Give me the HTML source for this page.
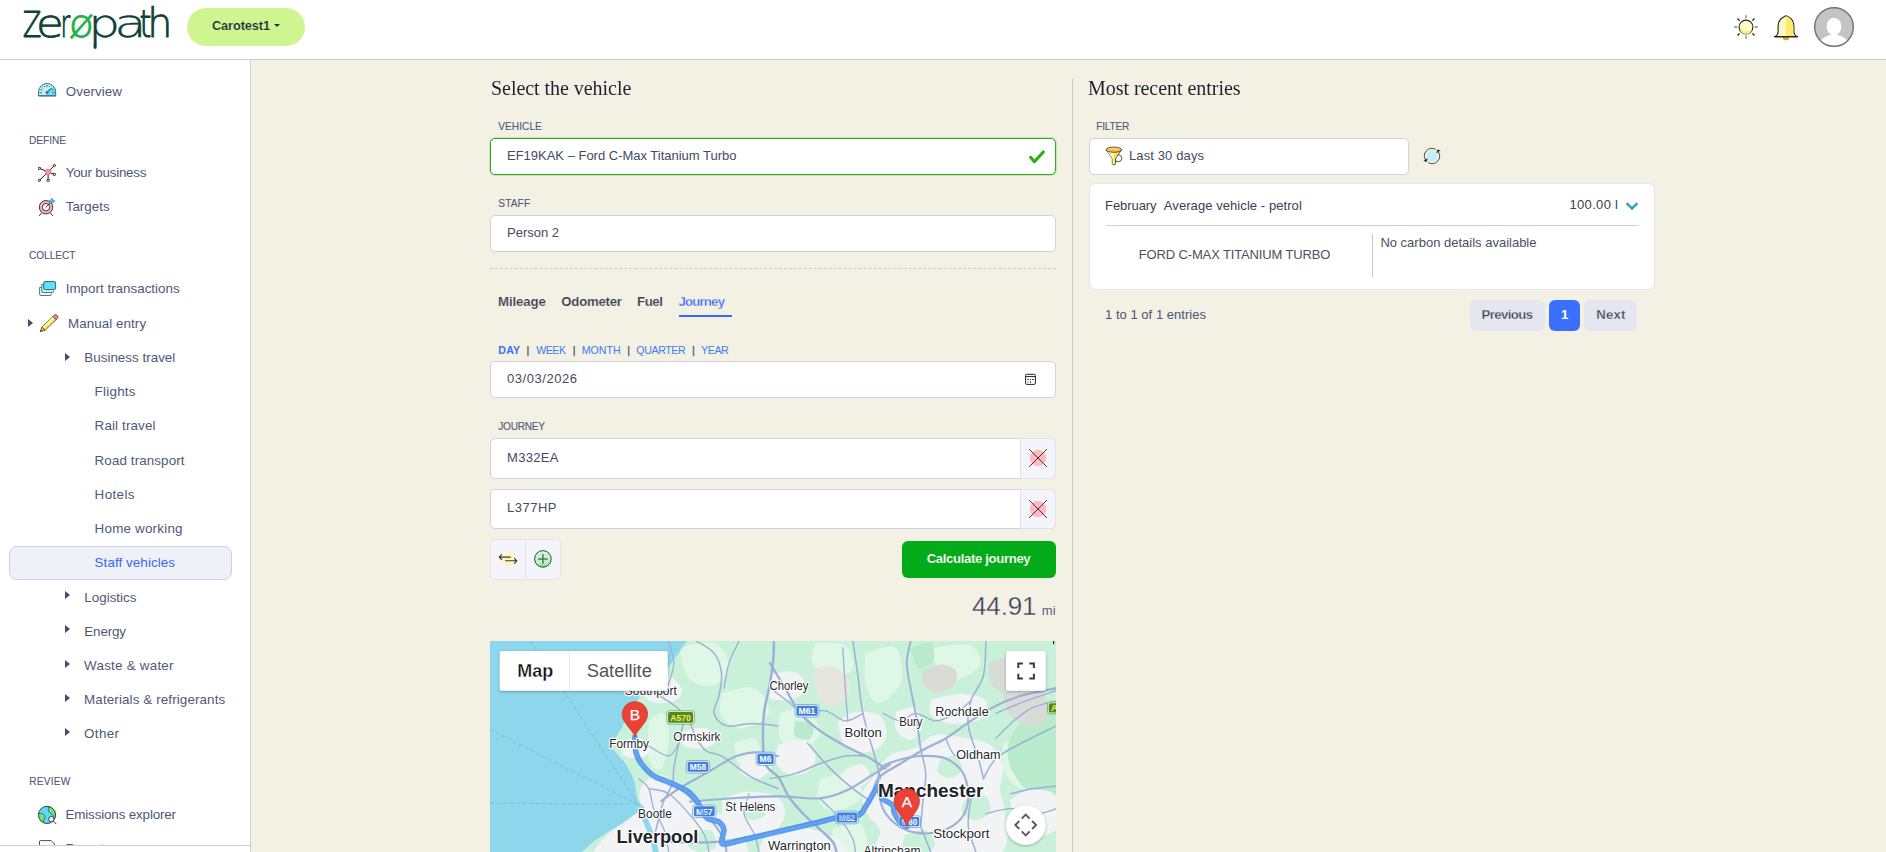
<!DOCTYPE html>
<html lang="en">
<head>
<meta charset="utf-8">
<title>Zeropath – Staff vehicles</title>
<style>
*{box-sizing:border-box;margin:0;padding:0}
html,body{width:1886px;height:852px;overflow:hidden;background:#f3f0e4;font-family:"Liberation Sans",sans-serif;color:#4a5473}
.abs{position:absolute}
#hdr{position:absolute;left:0;top:0;width:1886px;height:60px;background:#fff;border-bottom:1px solid #c9cfe2}
#side{position:absolute;left:0;top:60px;width:251px;height:792px;background:#fff;border-right:1px solid #c9cfe2}
#sidefoot{position:absolute;left:0;top:845px;width:251px;height:7px;background:#fff;border-right:1px solid #c9cfe2;border-top:1px solid #c9cfe2;z-index:5}
.t{position:absolute;white-space:nowrap;line-height:1;font-size:13px}
.box{position:absolute;background:#fff;border:1px solid #cdd3e3;border-radius:5px}
.car{position:absolute;width:0;height:0;border-left:5.4px solid #464e70;border-top:4px solid transparent;border-bottom:4px solid transparent}
svg{position:absolute;overflow:visible}
#pill{position:absolute;left:187px;top:8px;width:118px;height:38px;border-radius:19px;background:#cff590}
#sel{position:absolute;left:9px;top:546px;width:223px;height:34px;border:1px solid #cbd1e2;border-radius:8px;background:#eef1f8}
.addon{position:absolute;background:#f4f5fa;border:1px solid #dfe3ee}
.pg{position:absolute;top:300px;height:31px;border-radius:6px;background:#e4e7f0}
</style>
</head>
<body>
<div id="hdr"></div>
<div id="side"></div>
<div id="sidefoot"></div>

<!-- header -->
<svg id="logo" style="left:0;top:0" width="180" height="58" viewBox="0 0 180 58"><text y="37.4" font-family="'DejaVu Sans',sans-serif" font-weight="200" stroke-width="0.75" stroke-linejoin="round"><tspan x="22.77" font-size="35.4" textLength="18.65" lengthAdjust="spacingAndGlyphs" fill="#0e4037" stroke="#0e4037" stroke-width="1.0">Z</tspan><tspan x="36.08" font-size="39.2" textLength="27.82" lengthAdjust="spacingAndGlyphs" fill="#0e4037" stroke="#0e4037" stroke-width="0.75">e</tspan><tspan x="60.57" font-size="39.2" textLength="9.76" lengthAdjust="spacingAndGlyphs" fill="#0e4037" stroke="#0e4037" stroke-width="1.0">r</tspan><tspan x="68.65" font-size="38.2" textLength="25.28" lengthAdjust="spacingAndGlyphs" fill="#22b14c" stroke="#22b14c" stroke-width="0.85">ø</tspan><tspan x="88.22" font-size="39.2" textLength="31.88" lengthAdjust="spacingAndGlyphs" fill="#0e4037" stroke="#0e4037" stroke-width="0.45">p</tspan><tspan x="114.23" font-size="39.2" textLength="32.44" lengthAdjust="spacingAndGlyphs" fill="#0e4037" stroke="#0e4037" stroke-width="0.4">a</tspan><tspan x="139.47" font-size="36.8" textLength="11.96" lengthAdjust="spacingAndGlyphs" fill="#0e4037" stroke="#0e4037" stroke-width="1.0">t</tspan><tspan x="147.23" font-size="40.6" textLength="25.20" lengthAdjust="spacingAndGlyphs" fill="#0e4037" stroke="#0e4037" stroke-width="0.75">h</tspan></text><rect x="93.600" y="44" width="3" height="4.700" rx=".9" fill="#0e4037"/></svg>
<div id="pill"></div>
<div class="abs" style="left:273.7px;top:24px;width:0;height:0;border-top:3px solid #27303a;border-left:3px solid transparent;border-right:3px solid transparent"></div>
<!-- sun -->
<svg style="left:1733px;top:14px" width="26" height="26" viewBox="-13 -13 26 26">
<g stroke="#7d7d78" stroke-width="1.3" stroke-linecap="round"><path d="M0-11.3V-9.2M0 11.3V9.2M-11.3 0H-9.2M11.3 0H9.2M-8-8L-6.6-6.6M8 8L6.6 6.6M-8 8L-6.6 6.6M8-8L6.6-6.6"/></g>
<g stroke="#2b2b25" stroke-width="1.1" stroke-linecap="round"><path d="M-8-8L-6.9-6.9M8 8L6.9 6.9M-8 8L-6.9 6.9M8-8L6.9-6.9"/></g>
<circle r="6.9" fill="#fffbc8" stroke="#26261f" stroke-width="1.1"/>
<path d="M-6.2 2.2A6.4 6.4 0 0 0 6.2 2.2A12 12 0 0 1-6.2 2.2Z" fill="#fdf07a"/>
</svg>
<!-- bell -->
<svg style="left:1772px;top:13.600px" width="28" height="28" viewBox="0 0 28 28">
<path d="M11 23.600a3 2.300 0 0 0 6 0z" fill="#f5a623" stroke="#c47d12" stroke-width=".5"/>
<path d="M3 22.6c2.2-1 2.9-2.2 3.1-4.6V12C6.3 6.6 10 3.4 12.6 2.4c.8-.9 2-.9 2.8 0C18 3.4 21.700 6.600 21.900 12V18c.2 2.400.900 3.600 3.100 4.600z" fill="#fff9c4" stroke="#1e1e1e" stroke-width="1.1" stroke-linejoin="round"/>
<path d="M14 2.300C17.600 3.300 21.200 6.600 21.350 12V18c.15 2.200.650 3.300 2 4.050H14z" fill="#fdec6a"/>
<path d="M2.4 22.6H25.6" stroke="#1e1e1e" stroke-width="1.2" stroke-linecap="round"/>
</svg>
<!-- avatar -->
<svg style="left:1814px;top:7px" width="40" height="40" viewBox="0 0 40 40">
<defs><clipPath id="avc"><circle cx="20" cy="20" r="19"/></clipPath></defs>
<circle cx="20" cy="20" r="19.2" fill="#c4c4c4"/>
<g clip-path="url(#avc)" fill="#fff"><ellipse cx="20" cy="19.500" rx="7.400" ry="8.800"/><path d="M5 40c0-8 6-10.500 11.500-12h7c5.500 1.500 11.500 4 11.500 12z"/></g>
<circle cx="20" cy="20" r="19.300" fill="none" stroke="#75726c" stroke-width="1.400"/>
</svg>


<!-- sidebar -->
<div id="sel"></div>
<div class="car" style="left:27.5px;top:318.5px"></div>
<div class="car" style="left:64.7px;top:352.7px"></div>
<div class="car" style="left:64.7px;top:591.3px"></div>
<div class="car" style="left:64.7px;top:625.3px"></div>
<div class="car" style="left:64.7px;top:659.5px"></div>
<div class="car" style="left:64.7px;top:693.5px"></div>
<div class="car" style="left:64.7px;top:727.5px"></div>
<!-- overview gauge -->
<svg style="left:36px;top:80px" width="22" height="19" viewBox="36 80 22 19">
<defs><clipPath id="gcl"><path d="M38.500 96V92.100a8.600 8.600 0 0 1 17.200 0V96z"/></clipPath></defs>
<path d="M38.500 96V92.100a8.600 8.600 0 0 1 17.200 0V96z" fill="#bff1fb"/>
<path d="M44 96.500L56 84.500V96.500z" fill="#6fe0fa" clip-path="url(#gcl)"/>
<path d="M38.500 96V92.100a8.600 8.600 0 0 1 17.200 0V96z" fill="none" stroke="#2c5a6b" stroke-width=".9" stroke-linejoin="round"/>
<path d="M38.400 95.600H55.800" stroke="#2f8199" stroke-width="1.1"/>
<g stroke="#356f80" stroke-width="1.1"><path d="M39.600 92.700H42M52.200 92.700H54.600M47 85V87M40.600 89.400L42 90.400M53.400 89.400L52.100 90.300"/></g>
<g fill="#2b5866"><circle cx="44.500" cy="86.500" r=".6"/><circle cx="49.500" cy="86.500" r=".6"/><circle cx="42.500" cy="88" r=".5"/></g>
<path d="M47.100 92.300L51.500 88.100" stroke="#2b6a80" stroke-width="1.2" stroke-linecap="round"/>
<circle cx="47" cy="92.500" r="1.250" fill="#d63a3a" stroke="#2b6a80" stroke-width=".5"/>
</svg>
<!-- your business -->
<svg style="left:36px;top:162px" width="22" height="22" viewBox="36 162 22 22">
<g stroke="#1d1d1d" stroke-width="1" stroke-linecap="round"><path d="M48 172L54.400 165.500M48 172L39.400 180.400M48 172L39.800 168.400M48 172L54.200 174.400M48.100 172V180"/></g>
<circle cx="48" cy="171.900" r="3" fill="#fb8b9c" stroke="#e06a7d" stroke-width=".4"/>
<g fill="#f6e24a" stroke="#1d1d1d" stroke-width=".9"><circle cx="54.400" cy="165.500" r="1.100"/><circle cx="39.400" cy="180.400" r="1.100"/><rect x="38.500" y="167.300" width="2.100" height="2.100" stroke-width=".6"/><rect x="53.400" y="173.500" width="2.100" height="2.100" stroke-width=".6"/><rect x="47.100" y="179.300" width="2.100" height="2.100" stroke-width=".6"/></g>
</svg>
<!-- targets -->
<svg style="left:36px;top:196px" width="22" height="22" viewBox="36 196 22 22">
<path d="M39.400 215.600L41.500 213.100M52.600 215.600L50.400 213.100" stroke="#1d1d1d" stroke-width=".9" stroke-linecap="round"/>
<circle cx="46" cy="207.200" r="6.700" fill="#f98b9b" stroke="#1d1d1d" stroke-width=".8"/>
<circle cx="46" cy="207.200" r="5.200" fill="none" stroke="#fdc3cb" stroke-width="1.200"/>
<circle cx="46" cy="207.200" r="3.700" fill="#fff" stroke="#1d1d1d" stroke-width=".8"/>
<path d="M46 207.200L51 202.300" stroke="#1d1d1d" stroke-width=".9" stroke-linecap="round"/>
<path d="M50.200 203.200L50 200.300L52.300 198L52.800 200.300L55.100 200.800L52.900 203.100z" fill="#4cc3e6" stroke="#1e7fa0" stroke-width=".5" stroke-linejoin="round"/>
</svg>
<!-- import transactions -->
<svg style="left:36px;top:278px" width="22" height="20" viewBox="36 278 22 20">
<path d="M41.700 287.500H39.600V294.300a1.200 1.200 0 0 0 1.200 1.200H50.200a1.200 1.200 0 0 0 1.200-1.200V293.500" fill="#e3fafe" stroke="#2a5565" stroke-width=".8"/>
<path d="M43.800 284.500H41.800V291.300a1.200 1.200 0 0 0 1.200 1.200H52.400a1.200 1.200 0 0 0 1.200-1.200V290.500" fill="#c8f5fd" stroke="#2a5565" stroke-width=".8"/>
<rect x="43.700" y="281.600" width="11.900" height="8" rx="1.400" fill="#62e0fb" stroke="#2a5565" stroke-width=".9"/>
</svg>
<!-- manual entry pencil -->
<svg style="left:37px;top:312px" width="24" height="22" viewBox="37 312 24 22">
<g transform="translate(40.200 331.700) rotate(-43.500)">
<path d="M0 0L4.600-2.250V2.250z" fill="#f5b042" stroke="#3a3322" stroke-width=".7" stroke-linejoin="round"/>
<path d="M0 0L1.700-.8V.8z" fill="#3a3322"/>
<rect x="4.600" y="-2.250" width="15.200" height="4.500" fill="#f9e860" stroke="#3a3322" stroke-width=".7"/>
<rect x="4.900" y="-1.900" width="14.800" height="1.700" fill="#fdf6a8"/>
<path d="M19.800-2.250h2a1.600 2.250 0 0 1 0 4.500H19.800z" fill="#f7879c" stroke="#3a3322" stroke-width=".7"/>
</g>
</svg>
<!-- emissions explorer -->
<svg style="left:36px;top:804px" width="22" height="22" viewBox="36 804 22 22">
<defs><clipPath id="gl"><circle cx="47" cy="814.900" r="8.600"/></clipPath></defs>
<circle cx="47" cy="814.900" r="8.600" fill="#5fd8f7"/>
<g clip-path="url(#gl)" fill="#72e37c" stroke="#2b4a3a" stroke-width=".7" stroke-linejoin="round">
<path d="M37 813.600c2.500-.3 5.500-.1 6.800.8c1.300 1 1.600 2.600.9 3.900c-.8 1.400-1.300 2.800-1.500 5l-2 1.500l-5-4z"/>
<path d="M48 807.800c1.500-1.200 4-1.700 5.500-1l3.500 4.500v9l-2.500-1c-.6-2.800-1.500-4.600-3.300-5.600c-1.700-1-2.700-2-2.500-3.300c.1-1 .2-1.800-.7-2.600z"/>
</g>
<circle cx="47" cy="814.900" r="8.600" fill="none" stroke="#23352d" stroke-width=".9"/>
<path d="M53.300 821.100L55.900 823.700" stroke="#2b2b2b" stroke-width="1" stroke-linecap="round"/>
<circle cx="51.300" cy="819.100" r="2.700" fill="#eef0f0" stroke="#2b2b2b" stroke-width=".8"/>
</svg>
<!-- reports (clipped) -->
<svg style="left:38px;top:839px" width="20" height="10" viewBox="38 839 20 10">
<path d="M39.500 849V841.600a1 1 0 0 1 1-1H51.200L54.500 844V849" fill="#fff" stroke="#3a3a3a" stroke-width=".9"/>
</svg>


<!-- main column 1 -->
<div class="box" style="left:490px;top:138px;width:566px;height:37px;border:1px solid #36ab19;box-shadow:0 0 0 1px rgba(54,171,25,.22)"></div>
<div class="box" style="left:490px;top:215px;width:566px;height:37px"></div>
<div class="abs" style="left:490px;top:268px;width:566px;height:0;border-top:1px dashed #c6ccdd"></div>
<div class="abs" style="left:679px;top:314.5px;width:53px;height:2px;background:#3568f5"></div>
<div class="box" style="left:490px;top:361px;width:566px;height:37px"></div>
<div class="box" style="left:490px;top:438px;width:566px;height:41px"></div>
<div class="addon" style="left:1020px;top:438px;width:36px;height:41px;border-radius:0 5px 5px 0"></div>
<div class="box" style="left:490px;top:489px;width:566px;height:40px"></div>
<div class="addon" style="left:1020px;top:489px;width:36px;height:40px;border-radius:0 5px 5px 0"></div>
<div class="addon" style="left:490px;top:539px;width:36px;height:41px;border-radius:5px 0 0 5px"></div>
<div class="addon" style="left:525px;top:539px;width:36px;height:41px;border-radius:0 5px 5px 0"></div>
<div class="abs" style="left:902px;top:541px;width:154px;height:37px;border-radius:6px;background:#02ab17"></div>
<svg id="map" style="left:490px;top:641px" width="566" height="211" viewBox="490 641 566 211">
<defs><clipPath id="mclip"><rect x="490" y="641" width="566" height="211"/></clipPath><filter id="sh" x="-20%" y="-20%" width="140%" height="150%"><feDropShadow dx="0" dy="1" stdDeviation="1.500" flood-color="#000" flood-opacity=".3"/></filter></defs>
<g clip-path="url(#mclip)">
<rect x="490" y="641" width="566" height="211" fill="#c9f1da"/>
<path d="M678.8 648.0 C684.7 647.2 705.6 640.1 714.0 643.0 C722.3 646.0 729.0 658.5 729.0 665.6 C729.0 672.7 720.7 683.6 714.0 685.7 C707.3 687.8 694.7 684.4 688.9 678.2 C683.0 671.9 680.5 653.1 678.8 648.0" fill="#def7e7"/>
<path d="M721.5 693.2 C726.9 692.4 746.2 684.9 754.1 688.2 C762.1 691.6 771.3 706.6 769.2 713.3 C767.1 720.0 749.5 728.0 741.6 728.4 C733.6 728.8 724.8 721.7 721.5 715.8 C718.1 710.0 721.5 697.0 721.5 693.2" fill="#def7e7"/>
<path d="M648.7 720.9 C651.2 719.6 660.4 710.4 663.7 713.3 C667.1 716.2 669.2 729.2 668.8 738.4 C668.3 747.6 664.6 765.2 661.2 768.6 C657.9 771.9 650.8 766.5 648.7 758.5 C646.6 750.6 648.7 727.1 648.7 720.9" fill="#def7e7"/>
<path d="M734.0 743.4 C737.4 742.6 749.9 736.3 754.1 738.4 C758.3 740.5 761.7 751.8 759.2 756.0 C756.6 760.2 743.3 765.6 739.1 763.5 C734.9 761.4 734.9 746.8 734.0 743.4" fill="#def7e7"/>
<path d="M815.2 643.0 C820.2 643.4 839.0 641.3 845.3 645.5 C851.6 649.7 854.9 662.7 852.9 668.1 C850.8 673.6 839.5 679.0 832.8 678.2 C826.1 677.3 815.6 669.0 812.7 663.1 C809.8 657.2 814.8 646.4 815.2 643.0" fill="#def7e7"/>
<path d="M865.4 653.1 C870.4 652.2 889.7 643.0 895.5 648.0 C901.4 653.1 903.5 674.0 900.6 683.2 C897.6 692.4 883.8 703.3 878.0 703.3 C872.1 703.3 867.5 691.6 865.4 683.2 C863.3 674.8 865.4 658.1 865.4 653.1" fill="#def7e7"/>
<path d="M780.0 713.3 C784.2 712.5 798.5 705.0 805.1 708.3 C811.8 711.6 821.1 726.7 820.2 733.4 C819.4 740.1 806.8 747.6 800.1 748.5 C793.4 749.3 783.4 744.3 780.0 738.4 C776.7 732.6 780.0 717.5 780.0 713.3" fill="#def7e7"/>
<path d="M930.7 648.0 C937.4 647.6 962.9 642.2 970.9 645.5 C978.8 648.9 982.6 662.3 978.4 668.1 C974.2 674.0 953.7 684.0 945.7 680.7 C937.8 677.3 933.2 653.5 930.7 648.0" fill="#def7e7"/>
<path d="M1003.5 743.4 C1008.5 741.8 1024.8 733.0 1033.6 733.4 C1042.4 733.8 1052.5 738.4 1056.2 746.0 C1060.0 753.5 1062.1 771.5 1056.2 778.6 C1050.4 785.7 1029.9 790.3 1021.1 788.6 C1012.3 787.0 1006.4 776.1 1003.5 768.6 C1000.6 761.0 1003.5 747.6 1003.5 743.4" fill="#def7e7"/>
<path d="M820.2 778.6 C825.7 777.8 846.2 770.2 852.9 773.6 C859.5 776.9 863.7 792.4 860.4 798.7 C857.0 805.0 839.9 811.2 832.8 811.2 C825.7 811.2 819.8 804.1 817.7 798.7 C815.6 793.2 819.8 781.9 820.2 778.6" fill="#def7e7"/>
<path d="M832.8 828.8 C837.4 828.0 854.9 819.9 860.4 823.8 C865.8 827.6 869.6 847.2 865.4 851.9 C861.2 856.6 840.7 855.8 835.3 851.9 C829.8 848.1 833.2 832.7 832.8 828.8" fill="#def7e7"/>
<path d="M1021.1 720.9 C1026.9 719.6 1050.4 700.3 1056.2 713.3 C1062.1 726.3 1060.4 785.3 1056.2 798.7 C1052.0 812.1 1038.6 798.7 1031.1 793.7 C1023.6 788.6 1014.8 776.9 1011.0 768.6 C1007.3 760.2 1006.8 751.4 1008.5 743.4 C1010.2 735.5 1019.0 724.6 1021.1 720.9" fill="#b9eacb"/>
<path d="M910.6 648.0 C913.9 647.2 926.9 640.9 930.7 643.0 C934.4 645.1 935.3 656.4 933.2 660.6 C931.1 664.8 921.9 670.2 918.1 668.1 C914.4 666.0 911.9 651.4 910.6 648.0" fill="#b9eacb"/>
<path d="M795.1 720.9 C798.0 721.3 810.2 720.4 812.7 723.4 C815.2 726.3 813.1 736.3 810.2 738.4 C807.2 740.5 797.6 738.8 795.1 735.9 C792.6 733.0 795.1 723.4 795.1 720.9" fill="#b9eacb"/>
<path d="M641.0 806.0 C640.8 803.3 638.5 794.7 640.0 790.0 C641.5 785.3 645.8 780.3 650.0 778.0 C654.2 775.7 660.0 774.0 665.0 776.0 C670.0 778.0 674.2 786.0 680.0 790.0 C685.8 794.0 694.2 796.3 700.0 800.0 C705.8 803.7 709.2 808.7 715.0 812.0 C720.8 815.3 730.0 815.3 735.0 820.0 C740.0 824.7 744.2 834.0 745.0 840.0 C745.8 846.0 754.2 853.3 740.0 856.0 C725.8 858.7 674.7 859.5 660.0 856.0 C645.3 852.5 654.3 841.3 652.0 835.0 C649.7 828.7 647.8 822.8 646.0 818.0 C644.2 813.2 641.8 808.0 641.0 806.0" fill="#f1f3f4"/>
<path d="M722.0 800.0 C725.8 798.7 736.2 792.7 745.0 792.0 C753.8 791.3 768.3 792.7 775.0 796.0 C781.7 799.3 785.0 806.3 785.0 812.0 C785.0 817.7 781.7 826.0 775.0 830.0 C768.3 834.0 753.3 836.8 745.0 836.0 C736.7 835.2 728.8 831.0 725.0 825.0 C721.2 819.0 722.5 804.2 722.0 800.0" fill="#f1f3f4"/>
<path d="M765.0 836.0 C770.8 834.7 788.3 827.7 800.0 828.0 C811.7 828.3 828.0 833.3 835.0 838.0 C842.0 842.7 853.7 853.0 842.0 856.0 C830.3 859.0 777.8 859.3 765.0 856.0 C752.2 852.7 765.0 839.3 765.0 836.0" fill="#f1f3f4"/>
<path d="M778.0 745.0 C781.7 744.2 793.8 738.8 800.0 740.0 C806.2 741.2 813.3 747.0 815.0 752.0 C816.7 757.0 814.2 766.2 810.0 770.0 C805.8 773.8 795.7 776.3 790.0 775.0 C784.3 773.7 778.0 767.0 776.0 762.0 C774.0 757.0 777.7 747.8 778.0 745.0" fill="#f1f3f4"/>
<path d="M875.0 775.0 C877.5 771.7 883.3 759.5 890.0 755.0 C896.7 750.5 907.5 751.3 915.0 748.0 C922.5 744.7 926.7 736.7 935.0 735.0 C943.3 733.3 955.8 736.3 965.0 738.0 C974.2 739.7 983.7 740.5 990.0 745.0 C996.3 749.5 1001.3 757.5 1003.0 765.0 C1004.7 772.5 999.7 781.7 1000.0 790.0 C1000.3 798.3 1005.8 804.0 1005.0 815.0 C1004.2 826.0 1015.0 849.2 995.0 856.0 C975.0 862.8 904.2 860.3 885.0 856.0 C865.8 851.7 882.8 836.8 880.0 830.0 C877.2 823.2 871.0 820.8 868.0 815.0 C865.0 809.2 860.8 801.7 862.0 795.0 C863.2 788.3 872.8 778.3 875.0 775.0" fill="#f1f3f4"/>
<path d="M838.0 722.0 C840.8 720.3 848.0 713.0 855.0 712.0 C862.0 711.0 874.8 711.7 880.0 716.0 C885.2 720.3 887.7 732.0 886.0 738.0 C884.3 744.0 876.8 750.7 870.0 752.0 C863.2 753.3 850.3 751.0 845.0 746.0 C839.7 741.0 839.2 726.0 838.0 722.0" fill="#f1f3f4"/>
<path d="M896.0 712.0 C899.2 711.3 910.7 705.3 915.0 708.0 C919.3 710.7 922.8 722.7 922.0 728.0 C921.2 733.3 914.3 739.7 910.0 740.0 C905.7 740.3 898.3 734.7 896.0 730.0 C893.7 725.3 896.0 715.0 896.0 712.0" fill="#f1f3f4"/>
<path d="M930.0 700.0 C935.0 699.0 950.8 694.0 960.0 694.0 C969.2 694.0 981.3 696.0 985.0 700.0 C988.7 704.0 987.0 714.0 982.0 718.0 C977.0 722.0 963.3 724.3 955.0 724.0 C946.7 723.7 936.2 720.0 932.0 716.0 C927.8 712.0 930.3 702.7 930.0 700.0" fill="#f1f3f4"/>
<path d="M770.0 674.0 C774.2 673.7 789.0 670.0 795.0 672.0 C801.0 674.0 805.8 681.7 806.0 686.0 C806.2 690.3 802.0 696.0 796.0 698.0 C790.0 700.0 774.3 702.0 770.0 698.0 C765.7 694.0 770.0 678.0 770.0 674.0" fill="#f1f3f4"/>
<path d="M640.0 678.0 C644.7 677.7 661.0 674.0 668.0 676.0 C675.0 678.0 681.3 685.7 682.0 690.0 C682.7 694.3 677.7 700.3 672.0 702.0 C666.3 703.7 653.3 704.0 648.0 700.0 C642.7 696.0 641.3 681.7 640.0 678.0" fill="#f1f3f4"/>
<path d="M620.0 742.0 C623.3 741.3 635.0 736.7 640.0 738.0 C645.0 739.3 650.0 746.7 650.0 750.0 C650.0 753.3 644.3 757.2 640.0 758.0 C635.7 758.8 627.3 757.7 624.0 755.0 C620.7 752.3 620.7 744.2 620.0 742.0" fill="#f1f3f4"/>
<path d="M680.0 732.0 C684.2 731.3 699.0 726.7 705.0 728.0 C711.0 729.3 716.0 736.7 716.0 740.0 C716.0 743.3 710.3 747.0 705.0 748.0 C699.7 749.0 688.2 748.7 684.0 746.0 C679.8 743.3 680.7 734.3 680.0 732.0" fill="#f1f3f4"/>
<path d="M590.0 856.0 C592.7 852.7 600.2 841.7 606.0 836.0 C611.8 830.3 619.3 826.0 625.0 822.0 C630.7 818.0 636.5 810.7 640.0 812.0 C643.5 813.3 643.7 822.7 646.0 830.0 C648.3 837.3 663.3 851.7 654.0 856.0 C644.7 860.3 600.7 856.0 590.0 856.0" fill="#f1f3f4"/>
<path d="M1010.0 800.0 C1013.3 798.3 1022.3 790.7 1030.0 790.0 C1037.7 789.3 1051.7 789.3 1056.0 796.0 C1060.3 802.7 1062.0 823.5 1056.0 830.0 C1050.0 836.5 1027.7 840.0 1020.0 835.0 C1012.3 830.0 1011.7 805.8 1010.0 800.0" fill="#f1f3f4"/>
<path d="M740.0 760.0 C743.3 758.7 754.7 751.2 760.0 752.0 C765.3 752.8 772.0 760.7 772.0 765.0 C772.0 769.3 765.0 776.5 760.0 778.0 C755.0 779.5 745.3 777.0 742.0 774.0 C738.7 771.0 740.3 762.3 740.0 760.0" fill="#f1f3f4"/>
<path d="M845.0 770.0 C847.8 769.0 857.8 762.7 862.0 764.0 C866.2 765.3 871.0 774.0 870.0 778.0 C869.0 782.0 860.7 787.3 856.0 788.0 C851.3 788.7 843.8 785.0 842.0 782.0 C840.2 779.0 844.5 772.0 845.0 770.0" fill="#f1f3f4"/>
<path d="M940.0 760.0 C942.5 759.3 951.3 754.3 955.0 756.0 C958.7 757.7 962.8 766.3 962.0 770.0 C961.2 773.7 954.0 777.7 950.0 778.0 C946.0 778.3 939.7 775.0 938.0 772.0 C936.3 769.0 939.7 762.0 940.0 760.0" fill="#c9f1da"/>
<path d="M905.0 835.0 C908.3 834.2 920.0 828.3 925.0 830.0 C930.0 831.7 935.8 840.7 935.0 845.0 C934.2 849.3 925.3 855.2 920.0 856.0 C914.7 856.8 905.5 853.5 903.0 850.0 C900.5 846.5 904.7 837.5 905.0 835.0" fill="#c9f1da"/>
<path d="M965.0 800.0 C968.3 799.3 980.8 794.0 985.0 796.0 C989.2 798.0 991.7 808.0 990.0 812.0 C988.3 816.0 979.7 820.0 975.0 820.0 C970.3 820.0 963.7 815.3 962.0 812.0 C960.3 808.7 964.5 802.0 965.0 800.0" fill="#c9f1da"/>
<path d="M690.0 835.0 C693.3 834.2 705.7 828.2 710.0 830.0 C714.3 831.8 717.7 842.3 716.0 846.0 C714.3 849.7 704.7 852.0 700.0 852.0 C695.3 852.0 689.7 848.8 688.0 846.0 C686.3 843.2 689.7 836.8 690.0 835.0" fill="#c9f1da"/>
<path d="M745.0 805.0 C747.5 804.5 756.7 800.3 760.0 802.0 C763.3 803.7 766.3 812.0 765.0 815.0 C763.7 818.0 755.7 820.3 752.0 820.0 C748.3 819.7 744.2 815.5 743.0 813.0 C741.8 810.5 744.7 806.3 745.0 805.0" fill="#c9f1da"/>
<path d="M812.7 670.6 C815.2 669.8 822.3 664.8 827.7 665.6 C833.2 666.5 841.6 671.5 845.3 675.7 C849.1 679.8 851.2 685.7 850.3 690.7 C849.5 695.7 844.5 703.7 840.3 705.8 C836.1 707.9 829.4 706.2 825.2 703.3 C821.1 700.3 817.3 693.7 815.2 688.2 C813.1 682.8 813.1 673.6 812.7 670.6" fill="#e6e6de"/>
<path d="M923.2 670.6 C926.1 669.6 935.3 664.4 940.7 664.4 C946.2 664.4 953.7 667.1 955.8 670.6 C957.9 674.2 956.6 682.1 953.3 685.7 C949.9 689.3 940.7 692.4 935.7 692.0 C930.7 691.6 925.2 686.7 923.2 683.2 C921.1 679.6 923.2 672.7 923.2 670.6" fill="#d9dbd6"/>
<path d="M988.4 663.1 C990.9 662.3 998.1 657.7 1003.5 658.1 C1008.9 658.5 1016.5 661.4 1021.1 665.6 C1025.7 669.8 1026.9 677.8 1031.1 683.2 C1035.3 688.6 1044.1 692.0 1046.2 698.3 C1048.3 704.5 1047.4 716.5 1043.7 720.9 C1039.9 725.2 1029.4 725.9 1023.6 724.6 C1017.7 723.4 1011.9 718.1 1008.5 713.3 C1005.2 708.5 1006.4 700.8 1003.5 695.7 C1000.6 690.7 993.4 688.6 990.9 683.2 C988.4 677.8 988.8 666.5 988.4 663.1" fill="#d9dbd6"/>
<path d="M490.0 641.0 L687.0 641.0 L677.0 655.0 L668.0 668.0 L656.0 680.0 L641.7 690.0 L638.9 698.6 L628.4 710.9 L621.8 728.0 L615.1 738.5 L611.3 747.0 L617.0 753.7 L624.6 762.2 L631.3 773.7 L635.1 783.2 L636.0 792.7 L637.9 800.3 L642.1 806.3 L640.8 809.8 L636.0 813.6 L622.7 823.1 L607.5 832.2 L594.2 841.1 L581.9 852.0 L490.0 851.9Z" fill="#8dd6ec"/>
<path d="M639.5 804.1 L643.7 806.3 L647.8 819.3 L652.8 830.7 L656.6 842.1 L658.9 852.0 L652.8 852.0 L650.9 842.1 L647.1 830.7 L642.9 821.2 L637.9 811.7Z" fill="#8dd6ec"/>
<path d="M490.0 729.6 L636.6 803.7" stroke="#68c1df" stroke-width=".9" stroke-dasharray="4 2.500" fill="none"/>
<path d="M530.7 641.0 L639.1 805.7" stroke="#68c1df" stroke-width=".9" stroke-dasharray="4 2.500" fill="none"/>
<path d="M490.0 803.2 L637.6 804.2" stroke="#68c1df" stroke-width=".9" stroke-dasharray="4 2.500" fill="none"/>
<path d="M774.0 641.0 C773.8 644.7 773.8 655.2 773.0 663.0 C772.2 670.8 770.5 679.7 769.0 688.0 C767.5 696.3 765.0 704.2 764.0 713.0 C763.0 721.8 762.7 732.4 763.0 741.0 C763.3 749.6 763.0 758.4 765.6 764.5 C768.2 770.6 774.7 772.1 778.6 777.5 C782.5 782.9 784.9 790.9 789.0 797.0 C793.1 803.1 798.2 808.6 803.4 814.0 C808.6 819.4 815.3 824.8 820.3 829.6 C825.3 834.4 830.5 838.2 833.3 842.6 C836.1 847.0 836.6 853.8 837.2 856.0" fill="none" stroke="#9db0d6" stroke-width="2.5" stroke-linecap="round"/>
<path d="M690.0 801.6 C698.2 801.0 724.3 798.6 739.5 797.7 C754.7 796.8 767.7 796.3 781.2 796.4 C794.7 796.5 809.4 799.3 820.3 798.3 C831.2 797.3 837.7 794.4 846.4 790.5 C855.1 786.6 865.1 779.2 872.4 774.9 C879.7 770.6 887.1 766.2 890.0 764.5" fill="none" stroke="#9db0d6" stroke-width="2.1" stroke-linecap="round"/>
<path d="M651.2 692.0 C653.3 693.0 659.6 695.7 663.7 698.3 C667.9 700.8 672.1 703.3 676.3 707.0 C680.5 710.8 685.5 715.6 688.9 720.9 C692.2 726.1 693.5 733.4 696.4 738.4 C699.3 743.4 702.2 748.1 706.4 751.0 C710.6 753.9 716.1 753.1 721.5 756.0 C726.9 758.9 733.6 764.8 739.1 768.6 C744.5 772.3 747.6 775.2 754.1 778.6 C760.6 781.9 774.0 787.0 778.0 788.6" fill="none" stroke="#9db0d6" stroke-width="1.5" stroke-linecap="round"/>
<path d="M661.2 801.2 C664.2 799.1 673.0 792.4 678.8 788.6 C684.7 784.9 690.5 781.9 696.4 778.6 C702.2 775.2 707.3 772.3 714.0 768.6 C720.7 764.8 729.4 758.7 736.6 756.0 C743.7 753.3 749.7 752.2 756.6 752.2 C763.5 752.2 774.4 755.4 778.0 756.0" fill="none" stroke="#9db0d6" stroke-width="2.1" stroke-linecap="round"/>
<path d="M683.8 720.9 C683.0 724.6 680.5 735.5 678.8 743.4 C677.1 751.4 674.8 761.9 673.8 768.6 C672.7 775.2 674.2 778.2 672.5 783.6 C670.9 789.1 666.0 795.3 663.7 801.2 C661.4 807.1 660.4 812.5 658.7 818.8 C657.1 825.0 654.5 835.5 653.7 838.9" fill="none" stroke="#9db0d6" stroke-width="1.5" stroke-linecap="round"/>
<path d="M672.5 783.6 C674.8 785.3 681.5 789.5 686.3 793.7 C691.2 797.8 696.8 803.7 701.4 808.7 C706.0 813.7 710.2 818.8 714.0 823.8 C717.7 828.8 721.9 834.2 724.0 838.9 C726.1 843.5 726.1 849.7 726.5 851.9" fill="none" stroke="#9db0d6" stroke-width="2.1" stroke-linecap="round"/>
<path d="M663.7 841.4 C667.9 841.6 679.0 842.6 688.9 842.6 C698.7 842.6 712.3 842.4 722.7 841.4 C733.2 840.3 742.4 838.0 751.6 836.3 C760.8 834.7 773.6 832.2 778.0 831.3" fill="none" stroke="#9db0d6" stroke-width="2.1" stroke-linecap="round"/>
<path d="M696.4 641.0 C699.3 643.0 709.8 647.7 714.0 653.1 C718.1 658.4 720.7 666.0 721.5 673.1 C722.3 680.3 720.2 689.1 719.0 695.7 C717.7 702.4 712.7 708.3 714.0 713.3 C715.2 718.3 720.2 724.2 726.5 725.9 C732.8 727.5 743.0 723.4 751.6 723.4 C760.2 723.4 773.6 725.5 778.0 725.9" fill="none" stroke="#9db0d6" stroke-width="1.5" stroke-linecap="round"/>
<path d="M739.1 641.0 C737.4 644.7 731.5 655.2 729.0 663.1 C726.5 671.0 724.8 684.0 724.0 688.2" fill="none" stroke="#9db0d6" stroke-width="1.3" stroke-linecap="round"/>
<path d="M668.8 641.0 C669.6 644.7 673.8 656.1 673.8 663.1 C673.8 670.1 670.4 677.8 668.8 683.2 C667.1 688.6 664.6 693.7 663.7 695.7" fill="none" stroke="#9db0d6" stroke-width="1.3" stroke-linecap="round"/>
<path d="M638.6 778.6 C640.3 780.3 646.2 783.6 648.7 788.6 C651.2 793.7 651.2 802.0 653.7 808.7 C656.2 815.4 661.2 821.6 663.7 828.8 C666.3 836.0 667.9 848.1 668.8 851.9" fill="none" stroke="#9db0d6" stroke-width="1.3" stroke-linecap="round"/>
<path d="M648.7 788.6 C652.0 789.5 662.1 789.5 668.8 793.7 C675.5 797.8 683.0 807.1 688.9 813.7 C694.7 820.4 700.6 827.5 703.9 833.8 C707.3 840.2 708.1 848.9 708.9 851.9" fill="none" stroke="#9db0d6" stroke-width="1.3" stroke-linecap="round"/>
<path d="M749.1 793.7 C748.3 797.0 743.3 807.1 744.1 813.7 C744.9 820.4 751.6 827.5 754.1 833.8 C756.6 840.2 758.3 848.9 759.2 851.9" fill="none" stroke="#9db0d6" stroke-width="1.3" stroke-linecap="round"/>
<path d="M636.1 738.4 C638.2 739.7 643.2 743.0 648.7 746.0 C654.1 748.9 663.7 756.4 668.8 756.0 C673.8 755.6 677.1 745.5 678.8 743.4" fill="none" stroke="#9db0d6" stroke-width="1.3" stroke-linecap="round"/>
<path d="M770.0 663.1 C772.5 667.3 780.0 679.8 785.1 688.2 C790.1 696.6 794.3 706.2 800.1 713.3 C806.0 720.4 812.7 725.5 820.2 730.9 C827.7 736.3 837.0 741.4 845.3 746.0 C853.7 750.6 863.7 754.7 870.4 758.5 C877.1 762.3 883.0 766.9 885.5 768.6" fill="none" stroke="#9db0d6" stroke-width="2.3" stroke-linecap="round"/>
<path d="M770.0 832.6 C774.2 831.5 784.2 828.8 795.1 826.3 C806.0 823.8 824.8 819.6 835.3 817.5 C845.7 815.4 852.0 816.5 857.9 813.7 C863.7 811.0 867.1 807.1 870.4 801.2 C873.8 795.3 872.9 784.9 878.0 778.6 C883.0 772.3 892.6 768.6 900.6 763.5 C908.5 758.5 918.1 752.7 925.7 748.5 C933.2 744.3 938.2 743.0 945.7 738.4 C953.3 733.8 962.5 726.3 970.9 720.9 C979.2 715.4 987.6 710.0 996.0 705.8 C1004.3 701.6 1011.0 698.7 1021.1 695.7 C1031.1 692.8 1050.4 689.5 1056.2 688.2" fill="none" stroke="#9db0d6" stroke-width="2.3" stroke-linecap="round"/>
<path d="M910.6 641.0 C910.0 644.7 906.8 655.2 906.8 663.1 C906.8 671.0 909.1 679.8 910.6 688.2 C912.1 696.6 913.9 703.3 915.6 713.3 C917.3 723.4 919.8 742.6 920.6 748.5" fill="none" stroke="#9db0d6" stroke-width="1.9" stroke-linecap="round"/>
<path d="M852.9 641.0 C853.7 646.8 856.2 663.6 857.9 675.7 C859.5 687.7 860.0 699.5 862.9 713.3 C865.8 727.1 872.5 747.6 875.4 758.5 C878.4 769.4 879.6 775.2 880.5 778.6" fill="none" stroke="#9db0d6" stroke-width="1.5" stroke-linecap="round"/>
<path d="M842.8 648.0 C843.2 654.7 844.5 676.1 845.3 688.2 C846.2 700.3 847.4 715.4 847.8 720.9" fill="none" stroke="#9db0d6" stroke-width="1.3" stroke-linecap="round"/>
<path d="M985.9 641.0 C985.5 646.8 985.9 665.7 983.4 675.7 C980.9 685.6 973.4 692.4 970.9 700.8 C968.3 709.1 967.1 716.2 968.3 725.9 C969.6 735.5 975.9 749.7 978.4 758.5 C980.9 767.3 982.6 775.2 983.4 778.6" fill="none" stroke="#9db0d6" stroke-width="1.5" stroke-linecap="round"/>
<path d="M1056.2 725.9 C1050.4 728.8 1031.1 738.0 1021.1 743.4 C1011.0 748.9 1002.2 752.7 996.0 758.5 C989.7 764.4 985.5 775.2 983.4 778.6" fill="none" stroke="#9db0d6" stroke-width="1.5" stroke-linecap="round"/>
<path d="M920.6 826.3 L930.7 851.9" fill="none" stroke="#9db0d6" stroke-width="1.5" stroke-linecap="round"/>
<path d="M970.9 798.7 C970.4 803.3 967.5 817.4 968.3 826.3 C969.2 835.2 974.6 847.6 975.9 851.9" fill="none" stroke="#9db0d6" stroke-width="1.5" stroke-linecap="round"/>
<path d="M1011.0 793.7 C1014.8 792.8 1026.1 789.9 1033.6 788.6 C1041.2 787.4 1052.5 786.5 1056.2 786.1" fill="none" stroke="#9db0d6" stroke-width="1.5" stroke-linecap="round"/>
<path d="M878.0 788.6 C878.4 785.3 877.5 773.2 880.5 768.6 C883.4 764.0 888.8 763.1 895.5 761.0 C902.2 758.9 912.3 756.4 920.6 756.0 C929.0 755.6 938.6 755.6 945.7 758.5 C952.9 761.4 959.6 766.9 963.3 773.6 C967.1 780.3 968.8 791.2 968.3 798.7 C967.9 806.2 965.4 813.3 960.8 818.8 C956.2 824.2 948.3 829.0 940.7 831.3 C933.2 833.6 923.2 833.8 915.6 832.6 C908.1 831.3 901.0 827.8 895.5 823.8 C890.1 819.8 885.9 814.6 883.0 808.7 C880.1 802.9 878.8 792.0 878.0 788.6" fill="none" stroke="#9db0d6" stroke-width="2.1" stroke-linecap="round"/>
<path d="M770.0 778.6 C774.2 777.8 786.7 776.1 795.1 773.6 C803.5 771.1 811.8 766.5 820.2 763.5 C828.6 760.6 837.8 757.3 845.3 756.0 C852.9 754.7 862.1 756.0 865.4 756.0" fill="none" stroke="#9db0d6" stroke-width="1.5" stroke-linecap="round"/>
<path d="M800.1 713.3 C804.3 712.9 817.7 709.6 825.2 710.8 C832.8 712.1 839.0 720.4 845.3 720.9 C851.6 721.3 860.0 714.6 862.9 713.3" fill="none" stroke="#9db0d6" stroke-width="1.3" stroke-linecap="round"/>
<path d="M807.7 743.4 C811.4 747.6 822.7 761.0 830.3 768.6 C837.8 776.1 846.2 783.2 852.9 788.6 C859.5 794.1 867.5 799.1 870.4 801.2" fill="none" stroke="#9db0d6" stroke-width="1.5" stroke-linecap="round"/>
<path d="M920.6 748.5 C921.5 752.7 925.2 765.2 925.7 773.6 C926.1 781.9 924.0 789.9 923.2 798.7 C922.3 807.5 921.1 821.7 920.6 826.3" fill="none" stroke="#9db0d6" stroke-width="1.5" stroke-linecap="round"/>
<path d="M883.0 713.3 C885.9 714.6 895.1 720.9 900.6 720.9 C906.0 720.9 909.8 713.3 915.6 713.3 C921.5 713.3 929.0 720.9 935.7 720.9 C942.4 720.9 949.9 716.7 955.8 713.3 C961.6 710.0 968.3 702.9 970.9 700.8" fill="none" stroke="#9db0d6" stroke-width="1.3" stroke-linecap="round"/>
<path d="M945.7 738.4 C947.4 741.4 950.3 752.7 955.8 756.0 C961.2 759.3 974.6 758.1 978.4 758.5" fill="none" stroke="#9db0d6" stroke-width="1.3" stroke-linecap="round"/>
<path d="M770.0 688.2 C773.3 690.7 785.1 699.1 790.1 703.3 C795.1 707.5 798.5 711.6 800.1 713.3" fill="none" stroke="#9db0d6" stroke-width="1.3" stroke-linecap="round"/>
<path d="M820.2 798.7 C823.6 802.0 834.9 812.1 840.3 818.8 C845.7 825.5 850.3 833.3 852.9 838.9 C855.4 844.4 854.9 849.7 855.4 851.9" fill="none" stroke="#9db0d6" stroke-width="1.3" stroke-linecap="round"/>
<path d="M985.9 813.7 C990.1 812.9 1002.7 808.7 1011.0 808.7 C1019.4 808.7 1028.6 813.7 1036.1 813.7 C1043.7 813.7 1052.9 809.6 1056.2 808.7" fill="none" stroke="#9db0d6" stroke-width="1.3" stroke-linecap="round"/>
<path d="M1056.2 700.8 C1052.0 702.0 1038.6 704.5 1031.1 708.3 C1023.6 712.1 1016.9 718.3 1011.0 723.4 C1005.2 728.4 998.5 735.9 996.0 738.4" fill="none" stroke="#9db0d6" stroke-width="1.3" stroke-linecap="round"/>
<path d="M1056.2 690.7 C1051.2 692.4 1036.1 697.0 1026.1 700.8 C1016.0 704.5 1001.0 711.2 996.0 713.3" fill="none" stroke="#9db0d6" stroke-width="1.3" stroke-linecap="round"/>
<path d="M634.9 737.0 C635.1 739.6 634.9 748.2 636.0 752.7 C637.1 757.2 638.8 760.3 641.7 764.1 C644.6 767.9 649.1 772.7 653.2 775.6 C657.3 778.5 661.4 779.1 666.5 781.3 C671.6 783.5 679.7 786.9 683.6 788.9 C687.5 790.9 687.6 790.9 690.0 793.1 C692.4 795.3 695.0 798.1 697.8 802.2 C700.6 806.3 703.4 814.6 706.9 817.9 C710.4 821.2 715.9 819.8 718.7 821.8 C721.5 823.8 723.2 825.9 723.9 829.6 C724.5 833.3 719.6 842.2 722.6 843.9 C725.6 845.6 732.3 842.2 742.1 840.0 C751.9 837.8 768.2 833.9 781.2 830.9 C794.2 827.9 811.2 824.0 820.3 821.8 C829.4 819.6 829.6 819.0 835.9 817.9 C842.2 816.8 853.1 817.3 858.1 815.3 C863.1 813.3 863.1 810.2 865.9 806.1 C868.7 802.0 872.9 793.8 875.0 790.5 C877.1 787.2 877.4 785.4 878.5 786.6 C879.6 787.8 880.1 795.4 881.6 797.9 C883.1 800.4 885.5 800.5 887.4 801.8 C889.3 803.1 892.0 803.9 893.1 805.6 C894.2 807.4 893.0 809.6 894.1 812.3 C895.2 815.0 897.7 819.6 899.9 822.0 C902.1 824.4 905.9 825.8 907.1 826.5" fill="none" stroke="#4a90ec" stroke-opacity=".78" stroke-width="5.400" stroke-linecap="round" stroke-linejoin="round"/>
<path d="M634.9 737.0 C635.1 739.6 634.9 748.2 636.0 752.7 C637.1 757.2 638.8 760.3 641.7 764.1 C644.6 767.9 649.1 772.7 653.2 775.6 C657.3 778.5 661.4 779.1 666.5 781.3 C671.6 783.5 679.7 786.9 683.6 788.9 C687.5 790.9 687.6 790.9 690.0 793.1 C692.4 795.3 695.0 798.1 697.8 802.2 C700.6 806.3 703.4 814.6 706.9 817.9 C710.4 821.2 715.9 819.8 718.7 821.8 C721.5 823.8 723.2 825.9 723.9 829.6 C724.5 833.3 719.6 842.2 722.6 843.9 C725.6 845.6 732.3 842.2 742.1 840.0 C751.9 837.8 768.2 833.9 781.2 830.9 C794.2 827.9 811.2 824.0 820.3 821.8 C829.4 819.6 829.6 819.0 835.9 817.9 C842.2 816.8 853.1 817.3 858.1 815.3 C863.1 813.3 863.1 810.2 865.9 806.1 C868.7 802.0 872.9 793.8 875.0 790.5 C877.1 787.2 877.4 785.4 878.5 786.6 C879.6 787.8 880.1 795.4 881.6 797.9 C883.1 800.4 885.5 800.5 887.4 801.8 C889.3 803.1 892.0 803.9 893.1 805.6 C894.2 807.4 893.0 809.6 894.1 812.3 C895.2 815.0 897.7 819.6 899.9 822.0 C902.1 824.4 905.9 825.8 907.1 826.5" fill="none" stroke="#7ab8fb" stroke-opacity=".8" stroke-width="2.400" stroke-linecap="round" stroke-linejoin="round"/>
<rect x="666.8" y="710.8" width="27.6" height="13.3" rx="2.500" fill="#f3f7e6" stroke="#4e8a22" stroke-width=".6"/>
<rect x="668.1" y="712.1" width="25.0" height="10.7" rx="1.600" fill="#4e8a22"/>
<text x="680.6" y="720.8" text-anchor="middle" font-size="9.400" font-weight="700" fill="#f8e94f" textLength="20.6" lengthAdjust="spacingAndGlyphs">A570</text>
<rect x="686.3" y="760.5" width="23.4" height="12.6" rx="2.500" fill="#fff" stroke="#3f7fda" stroke-width=".6"/>
<rect x="687.6" y="761.8" width="20.8" height="10.0" rx="1.600" fill="#3f7fda"/>
<text x="698.0" y="770.1" text-anchor="middle" font-size="9.400" font-weight="700" fill="#fff" textLength="16.4" lengthAdjust="spacingAndGlyphs">M58</text>
<rect x="692.6" y="805.0" width="23.4" height="12.5" rx="2.500" fill="#fff" stroke="#3f7fda" stroke-width=".6"/>
<rect x="693.9" y="806.3" width="20.8" height="9.9" rx="1.600" fill="#3f7fda"/>
<text x="704.3" y="814.5" text-anchor="middle" font-size="9.400" font-weight="700" fill="#fff" textLength="16.4" lengthAdjust="spacingAndGlyphs">M57</text>
<rect x="756.1" y="752.2" width="18.9" height="13.1" rx="2.500" fill="#fff" stroke="#3f7fda" stroke-width=".6"/>
<rect x="757.4" y="753.5" width="16.3" height="10.5" rx="1.600" fill="#3f7fda"/>
<text x="765.5" y="762.0" text-anchor="middle" font-size="9.400" font-weight="700" fill="#fff" textLength="11.9" lengthAdjust="spacingAndGlyphs">M6</text>
<rect x="795.1" y="704.5" width="23.9" height="12.6" rx="2.500" fill="#fff" stroke="#3f7fda" stroke-width=".6"/>
<rect x="796.4" y="705.8" width="21.3" height="10.0" rx="1.600" fill="#3f7fda"/>
<text x="807.0" y="714.1" text-anchor="middle" font-size="9.400" font-weight="700" fill="#fff" textLength="16.9" lengthAdjust="spacingAndGlyphs">M61</text>
<rect x="835.3" y="811.2" width="23.1" height="12.6" rx="2.500" fill="#fff" stroke="#3f7fda" stroke-width=".6"/>
<rect x="836.6" y="812.5" width="20.5" height="10.0" rx="1.600" fill="#3f7fda"/>
<text x="846.8" y="820.8" text-anchor="middle" font-size="9.400" font-weight="700" fill="#fff" textLength="16.1" lengthAdjust="spacingAndGlyphs">M62</text>
<rect x="898.0" y="815.8" width="22.6" height="11.8" rx="2.500" fill="#fff" stroke="#3f7fda" stroke-width=".6"/>
<rect x="899.3" y="817.1" width="20.0" height="9.2" rx="1.600" fill="#3f7fda"/>
<text x="909.3" y="825.0" text-anchor="middle" font-size="9.400" font-weight="700" fill="#fff" textLength="15.6" lengthAdjust="spacingAndGlyphs">M60</text>
<rect x="1047.4" y="702.0" width="24.6" height="11.8" rx="2.500" fill="#f3f7e6" stroke="#4e8a22" stroke-width=".6"/>
<rect x="1048.7" y="703.3" width="22.0" height="9.2" rx="1.600" fill="#4e8a22"/>
<text x="1059.7" y="711.2" text-anchor="middle" font-size="9.400" font-weight="700" fill="#f8e94f" textLength="17.6" lengthAdjust="spacingAndGlyphs">A58</text>
<path d="M634.9 737.0 C635.1 739.6 634.9 748.2 636.0 752.7 C637.1 757.2 638.8 760.3 641.7 764.1 C644.6 767.9 649.1 772.7 653.2 775.6 C657.3 778.5 661.4 779.1 666.5 781.3 C671.6 783.5 679.7 786.9 683.6 788.9 C687.5 790.9 687.6 790.9 690.0 793.1 C692.4 795.3 695.0 798.1 697.8 802.2 C700.6 806.3 703.4 814.6 706.9 817.9 C710.4 821.2 715.9 819.8 718.7 821.8 C721.5 823.8 723.2 825.9 723.9 829.6 C724.5 833.3 719.6 842.2 722.6 843.9 C725.6 845.6 732.3 842.2 742.1 840.0 C751.9 837.8 768.2 833.9 781.2 830.9 C794.2 827.9 811.2 824.0 820.3 821.8 C829.4 819.6 829.6 819.0 835.9 817.9 C842.2 816.8 853.1 817.3 858.1 815.3 C863.1 813.3 863.1 810.2 865.9 806.1 C868.7 802.0 872.9 793.8 875.0 790.5 C877.1 787.2 877.4 785.4 878.5 786.6 C879.6 787.8 880.1 795.4 881.6 797.9 C883.1 800.4 885.5 800.5 887.4 801.8 C889.3 803.1 892.0 803.9 893.1 805.6 C894.2 807.4 893.0 809.6 894.1 812.3 C895.2 815.0 897.7 819.6 899.9 822.0 C902.1 824.4 905.9 825.8 907.1 826.5" fill="none" stroke="#4a90ee" stroke-opacity=".45" stroke-width="5.600" stroke-linecap="round" stroke-linejoin="round"/>
<text x="624.8" y="694.5" font-size="12" font-weight="400" fill="#24282b" stroke="#fff" stroke-width="2.400" stroke-linejoin="round" paint-order="stroke" textLength="52.0" lengthAdjust="spacingAndGlyphs">Southport</text>
<text x="609.3" y="748.0" font-size="12" font-weight="400" fill="#24282b" stroke="#fff" stroke-width="2.400" stroke-linejoin="round" paint-order="stroke" textLength="39.6" lengthAdjust="spacingAndGlyphs">Formby</text>
<text x="673.3" y="741.4" font-size="12" font-weight="400" fill="#24282b" stroke="#fff" stroke-width="2.400" stroke-linejoin="round" paint-order="stroke" textLength="47.2" lengthAdjust="spacingAndGlyphs">Ormskirk</text>
<text x="638.1" y="818.3" font-size="12" font-weight="400" fill="#24282b" stroke="#fff" stroke-width="2.400" stroke-linejoin="round" paint-order="stroke" textLength="33.7" lengthAdjust="spacingAndGlyphs">Bootle</text>
<text x="616.5" y="842.6" font-size="17.6" font-weight="700" fill="#202427" stroke="#fff" stroke-width="2.400" stroke-linejoin="round" paint-order="stroke" textLength="81.9" lengthAdjust="spacingAndGlyphs">Liverpool</text>
<text x="725.3" y="810.7" font-size="12.6" font-weight="400" fill="#24282b" stroke="#fff" stroke-width="2.400" stroke-linejoin="round" paint-order="stroke" textLength="50.1" lengthAdjust="spacingAndGlyphs">St Helens</text>
<text x="769.5" y="689.5" font-size="12" font-weight="400" fill="#24282b" stroke="#fff" stroke-width="2.400" stroke-linejoin="round" paint-order="stroke" textLength="38.9" lengthAdjust="spacingAndGlyphs">Chorley</text>
<text x="768.0" y="850.2" font-size="12.6" font-weight="400" fill="#24282b" stroke="#fff" stroke-width="2.400" stroke-linejoin="round" paint-order="stroke" textLength="62.8" lengthAdjust="spacingAndGlyphs">Warrington</text>
<text x="844.6" y="737.2" font-size="13" font-weight="400" fill="#24282b" stroke="#fff" stroke-width="2.400" stroke-linejoin="round" paint-order="stroke" textLength="37.1" lengthAdjust="spacingAndGlyphs">Bolton</text>
<text x="899.3" y="725.9" font-size="12" font-weight="400" fill="#24282b" stroke="#fff" stroke-width="2.400" stroke-linejoin="round" paint-order="stroke" textLength="23.1" lengthAdjust="spacingAndGlyphs">Bury</text>
<text x="935.2" y="715.8" font-size="12.6" font-weight="400" fill="#24282b" stroke="#fff" stroke-width="2.400" stroke-linejoin="round" paint-order="stroke" textLength="53.5" lengthAdjust="spacingAndGlyphs">Rochdale</text>
<text x="956.3" y="759.3" font-size="12.6" font-weight="400" fill="#24282b" stroke="#fff" stroke-width="2.400" stroke-linejoin="round" paint-order="stroke" textLength="44.2" lengthAdjust="spacingAndGlyphs">Oldham</text>
<text x="878.0" y="797.4" font-size="18" font-weight="700" fill="#202427" stroke="#fff" stroke-width="2.400" stroke-linejoin="round" paint-order="stroke" textLength="105.4" lengthAdjust="spacingAndGlyphs">Manchester</text>
<text x="933.2" y="838.1" font-size="12.6" font-weight="400" fill="#24282b" stroke="#fff" stroke-width="2.400" stroke-linejoin="round" paint-order="stroke" textLength="56.2" lengthAdjust="spacingAndGlyphs">Stockport</text>
<text x="863.4" y="854.8" font-size="12" font-weight="400" fill="#24282b" stroke="#fff" stroke-width="2.400" stroke-linejoin="round" paint-order="stroke" textLength="57.2" lengthAdjust="spacingAndGlyphs">Altrincham</text>
<path d="M634.9 737.2C633.4 730.2 622.1 723.3 622.1 714.3A12.8 12.8 0 0 1 647.7 714.3C647.7 723.3 636.4 730.2 634.9 737.2Z" fill="#ea4335" stroke="#c5221f" stroke-width=".5"/>
<text x="634.9" y="719.9" text-anchor="middle" font-size="15.500" fill="#fff" stroke="#fff" stroke-width=".25">B</text>
<path d="M906.8 826.3C905.3 819.3 894.0 810.4 894.0 801.4A12.8 12.8 0 0 1 919.6 801.4C919.6 810.4 908.3 819.3 906.8 826.3Z" fill="#ea4335" stroke="#c5221f" stroke-width=".5"/>
<text x="906.8" y="807.0" text-anchor="middle" font-size="15.500" fill="#fff" stroke="#fff" stroke-width=".25">A</text>
<rect x="1053" y="641" width="1.200" height="3.300" fill="#1f2226"/>
</g>
<g filter="url(#sh)"><rect x="499.700" y="651" width="168" height="39.700" rx="2" fill="#fff"/></g>
<rect x="569" y="651" width="1" height="39.700" fill="#e8e8e8"/>
<text x="517.200" y="676.900" font-size="17.600" font-weight="700" fill="#0a0a0a" stroke="#fff" stroke-width=".35" textLength="36" lengthAdjust="spacingAndGlyphs">Map</text>
<text x="586.700" y="676.900" font-size="17.600" fill="#565656" textLength="65.200" lengthAdjust="spacingAndGlyphs">Satellite</text>
<g filter="url(#sh)"><rect x="1006" y="651" width="39.700" height="39.700" rx="2" fill="#fff"/></g>
<path d="M1018.300 668V663.400H1022.900M1029.300 663.400H1033.900V668M1033.900 673.800V678.400H1029.300M1022.900 678.400H1018.300V673.800" fill="none" stroke="#3a3a3a" stroke-width="2"/>
<g filter="url(#sh)"><circle cx="1025.700" cy="825" r="19.800" fill="#fff"/></g>
<g fill="none" stroke="#5a5a5a" stroke-width="1.900" stroke-linejoin="miter"><path d="M1021.700 818.600L1025.700 814.600L1029.700 818.600"/><path d="M1021.700 831.400L1025.700 835.400L1029.700 831.400"/><path d="M1019.300 821L1015.300 825L1019.300 829"/><path d="M1032.100 821L1036.100 825L1032.100 829"/></g>
</svg>

<!-- divider -->
<div class="abs" style="left:1072px;top:78px;width:1px;height:774px;background:#c9cddb"></div>

<!-- main column 2 -->
<div class="box" style="left:1089px;top:138px;width:320px;height:37px"></div>
<div class="box" style="left:1089px;top:183px;width:566px;height:107px;border-color:#e4e6ee;border-radius:7px"></div>
<div class="abs" style="left:1105.5px;top:225px;width:533px;height:1px;background:#cdd2e0"></div>
<div class="abs" style="left:1372px;top:234px;width:1px;height:43px;background:#c4c8d4"></div>
<div class="pg" style="left:1470px;width:74.5px"></div>
<div class="pg" style="left:1549px;width:31px;background:#3a70fd"></div>
<div class="pg" style="left:1584px;width:53px"></div>
<!-- check -->
<svg style="left:1026px;top:146px" width="24" height="22" viewBox="1026 146 24 22">
<path d="M1030.600 157.300L1034.400 161.700L1043.300 151.900" fill="none" stroke="#2cab0c" stroke-width="3" stroke-linecap="round" stroke-linejoin="round"/>
</svg>
<!-- calendar -->
<svg style="left:1023px;top:371px" width="16" height="16" viewBox="1023 371 16 16">
<rect x="1025.600" y="374.300" width="9.800" height="10.100" rx="1.200" fill="#fff" stroke="#232323" stroke-width="1"/>
<path d="M1025.600 376.600H1035.400" stroke="#232323" stroke-width="1"/>
<g fill="#232323"><rect x="1027.300" y="379" width="1.700" height=".9"/><rect x="1030" y="379" width="1" height=".9"/><rect x="1032" y="379" width="1.700" height=".9"/><rect x="1027.300" y="381.400" width="1.500" height="1.300" opacity=".45"/><rect x="1030" y="381.300" width="1" height="1.500"/></g>
</svg>
<!-- remove x 1 -->
<svg style="left:1027px;top:447px" width="22" height="22" viewBox="-11 -11 22 22">
<circle r="8.300" fill="#ffb9c0"/><path d="M-8.900-8.900L8.900 8.900M8.900-8.900L-8.900 8.900" stroke="#262626" stroke-width=".9"/>
</svg>
<!-- remove x 2 -->
<svg style="left:1027px;top:498px" width="22" height="22" viewBox="-11 -11 22 22">
<circle r="8.300" fill="#ffb9c0"/><path d="M-8.900-8.900L8.900 8.900M8.900-8.900L-8.900 8.900" stroke="#262626" stroke-width=".9"/>
</svg>
<!-- swap -->
<svg style="left:497px;top:548px" width="22" height="22" viewBox="497 548 22 22">
<circle cx="508.100" cy="559" r="7" fill="#fff5c0"/>
<g fill="none" stroke="#3a3a2e" stroke-width="1.100" stroke-linecap="round" stroke-linejoin="round">
<path d="M510.300 557.100H499.600M501.600 554.600L499.300 557.100L501.600 559.500"/>
<path d="M505.500 560.800H516.600M514.400 558.300L516.900 560.800L514.400 563.300"/>
</g>
</svg>
<!-- plus -->
<svg style="left:532px;top:548px" width="22" height="22" viewBox="532 548 22 22">
<defs><linearGradient id="pg" x1="0" y1="0" x2="0" y2="1"><stop offset="0" stop-color="#cdf7d4"/><stop offset=".7" stop-color="#c0f3c8"/><stop offset="1" stop-color="#6fe682"/></linearGradient></defs>
<circle cx="542.900" cy="558.900" r="8.300" fill="url(#pg)" stroke="#36453a" stroke-width="1"/>
<path d="M538.100 558.900H547.700M542.900 554.100V563.700" stroke="#4f7a58" stroke-width="1.500"/>
</svg>
<!-- funnel -->
<svg style="left:1103px;top:144px" width="22" height="24" viewBox="1103 144 22 24">
<defs><linearGradient id="fg" x1="0" y1="0" x2="0" y2="1"><stop offset="0" stop-color="#fde0a0"/><stop offset="1" stop-color="#f8ad2a"/></linearGradient></defs>
<circle cx="1118.300" cy="158.300" r="3.500" fill="#fff" stroke="#2d2d2d" stroke-width=".8"/>
<path d="M1106.200 149.700L1112.300 158.600V163.900a1.600 1 0 0 0 3.200 0V158.600L1121.600 149.700z" fill="#f6e45c" stroke="#3a3520" stroke-width=".8" stroke-linejoin="round"/>
<path d="M1106.600 150.200L1112.700 158.700V163.800a1.200.8 0 0 0 1.200.7V150.200z" fill="#fdf8b4"/>
<ellipse cx="1113.900" cy="149.700" rx="7.700" ry="2.600" fill="url(#fg)" stroke="#3a3520" stroke-width=".8"/>
</svg>
<!-- refresh -->
<svg style="left:1421px;top:145px" width="22" height="22" viewBox="-11 -11 22 22">
<circle r="5.800" fill="#c5f0fb"/>
<g fill="none" stroke="#4a4a46" stroke-width="1" stroke-linecap="round">
<path d="M3.400-6.800A7.600 7.600 0 0 0-6.600 3.800"/><path d="M-3.400 6.800A7.600 7.600 0 0 0 6.600-3.800"/>
</g>
<path d="M-8.600 4.700L-4.300 2.200L-5.300 6z" fill="#2e2e2c"/><path d="M8.600-5.700L4.300-2.400L5.300-6.400z" fill="#2e2e2c"/>
</svg>
<!-- chevron -->
<svg style="left:1624px;top:200px" width="16" height="12" viewBox="1624 200 16 12">
<path d="M1626.600 203.200L1632 208.400L1637.400 203.200" fill="none" stroke="#3aa0c0" stroke-width="2.500" stroke-linecap="butt" stroke-linejoin="miter"/>
</svg>


<span class="t" id="t0" style="left:212.00px;top:20.16px;font-size:12.8px;color:#27303a;font-weight:700;letter-spacing:-0.129px;-webkit-text-stroke:.12px #cff590;">Carotest1</span>
<span class="t" id="t1" style="left:65.70px;top:84.66px;font-size:13.4px;color:#4e5877;letter-spacing:0.055px;">Overview</span>
<span class="t" id="t2" style="left:29.00px;top:135.55px;font-size:10.1px;color:#4e5877;-webkit-text-stroke:.1px #55607f;">DEFINE</span>
<span class="t" id="t3" style="left:65.70px;top:166.26px;font-size:13.4px;color:#4e5877;letter-spacing:-0.237px;">Your business</span>
<span class="t" id="t4" style="left:65.70px;top:200.36px;font-size:13.4px;color:#4e5877;letter-spacing:0.013px;">Targets</span>
<span class="t" id="t5" style="left:29.00px;top:250.95px;font-size:10.1px;color:#4e5877;letter-spacing:-0.027px;-webkit-text-stroke:.1px #55607f;">COLLECT</span>
<span class="t" id="t6" style="left:65.70px;top:282.26px;font-size:13.4px;color:#4e5877;letter-spacing:0.007px;">Import transactions</span>
<span class="t" id="t7" style="left:68.00px;top:317.06px;font-size:13.4px;color:#4e5877;letter-spacing:0.062px;">Manual entry</span>
<span class="t" id="t8" style="left:84.30px;top:350.96px;font-size:13.4px;color:#4e5877;letter-spacing:0.013px;">Business travel</span>
<span class="t" id="t9" style="left:94.60px;top:385.06px;font-size:13.4px;color:#4e5877;letter-spacing:0.241px;">Flights</span>
<span class="t" id="t10" style="left:94.60px;top:419.06px;font-size:13.4px;color:#4e5877;letter-spacing:0.135px;">Rail travel</span>
<span class="t" id="t11" style="left:94.60px;top:453.96px;font-size:13.4px;color:#4e5877;letter-spacing:0.102px;">Road transport</span>
<span class="t" id="t12" style="left:94.60px;top:488.06px;font-size:13.4px;color:#4e5877;letter-spacing:0.386px;">Hotels</span>
<span class="t" id="t13" style="left:94.60px;top:521.86px;font-size:13.4px;color:#4e5877;letter-spacing:0.210px;">Home working</span>
<span class="t" id="t14" style="left:94.60px;top:555.96px;font-size:13.4px;color:#3a66f2;letter-spacing:0.076px;">Staff vehicles</span>
<span class="t" id="t15" style="left:84.30px;top:591.06px;font-size:13.4px;color:#4e5877;letter-spacing:0.011px;">Logistics</span>
<span class="t" id="t16" style="left:84.30px;top:624.86px;font-size:13.4px;color:#4e5877;letter-spacing:-0.147px;">Energy</span>
<span class="t" id="t17" style="left:84.10px;top:659.16px;font-size:13.4px;color:#4e5877;letter-spacing:0.235px;">Waste &amp; water</span>
<span class="t" id="t18" style="left:84.10px;top:692.76px;font-size:13.4px;color:#4e5877;letter-spacing:0.116px;">Materials &amp; refrigerants</span>
<span class="t" id="t19" style="left:84.10px;top:726.86px;font-size:13.4px;color:#4e5877;letter-spacing:0.325px;">Other</span>
<span class="t" id="t20" style="left:29.20px;top:776.95px;font-size:10.1px;color:#4e5877;letter-spacing:0.234px;-webkit-text-stroke:.1px #55607f;">REVIEW</span>
<span class="t" id="t21" style="left:65.50px;top:807.86px;font-size:13.4px;color:#4e5877;letter-spacing:-0.149px;">Emissions explorer</span>
<span class="t" id="t22" style="left:65.50px;top:841.96px;font-size:13.4px;color:#4e5877;letter-spacing:-0.315px;">Reports</span>
<span class="t" id="t23" style="left:490.60px;top:78.33px;font-size:20px;color:#1f2330;font-family:'Liberation Serif',serif;letter-spacing:-0.044px;will-change:transform;">Select the vehicle</span>
<span class="t" id="t24" style="left:498.30px;top:122.15px;font-size:10.1px;color:#4e5877;letter-spacing:0.049px;-webkit-text-stroke:.1px #55607f;">VEHICLE</span>
<span class="t" id="t25" style="left:507.00px;top:148.90px;font-size:13px;color:#444b5e;letter-spacing:-0.008px;">EF19KAK – Ford C-Max Titanium Turbo</span>
<span class="t" id="t26" style="left:498.30px;top:199.15px;font-size:10.1px;color:#4e5877;letter-spacing:0.145px;-webkit-text-stroke:.1px #55607f;">STAFF</span>
<span class="t" id="t27" style="left:507.00px;top:225.90px;font-size:13px;color:#444b5e;letter-spacing:-0.007px;">Person 2</span>
<span class="t" id="t28" style="left:498.00px;top:295.13px;font-size:13.2px;color:#3a4256;font-weight:700;letter-spacing:-0.096px;-webkit-text-stroke:.15px #f3f0e4;">Mileage</span>
<span class="t" id="t29" style="left:561.30px;top:295.13px;font-size:13.2px;color:#3a4256;font-weight:700;letter-spacing:-0.242px;-webkit-text-stroke:.15px #f3f0e4;">Odometer</span>
<span class="t" id="t30" style="left:637.00px;top:295.13px;font-size:13.2px;color:#3a4256;font-weight:700;letter-spacing:-0.370px;-webkit-text-stroke:.15px #f3f0e4;">Fuel</span>
<span class="t" id="t31" style="left:678.40px;top:295.13px;font-size:13.2px;color:#3568f5;font-weight:700;letter-spacing:-0.785px;-webkit-text-stroke:.3px #f3f0e4;">Journey</span>
<span class="t" id="t32" style="left:498.20px;top:345.03px;font-size:10.6px;color:#3a70f5;font-weight:700;letter-spacing:0.297px;">DAY</span>
<span class="t" id="t33" style="left:526.50px;top:344.63px;font-size:10.6px;color:#474e66;-webkit-text-stroke:.25px #474e66;">|</span>
<span class="t" id="t34" style="left:536.30px;top:345.03px;font-size:10.6px;color:#3f7bf6;letter-spacing:-0.501px;">WEEK</span>
<span class="t" id="t35" style="left:572.70px;top:344.63px;font-size:10.6px;color:#474e66;-webkit-text-stroke:.25px #474e66;">|</span>
<span class="t" id="t36" style="left:581.80px;top:345.03px;font-size:10.6px;color:#3f7bf6;letter-spacing:-0.011px;">MONTH</span>
<span class="t" id="t37" style="left:627.30px;top:344.63px;font-size:10.6px;color:#474e66;-webkit-text-stroke:.25px #474e66;">|</span>
<span class="t" id="t38" style="left:636.30px;top:345.03px;font-size:10.6px;color:#3f7bf6;letter-spacing:-0.368px;">QUARTER</span>
<span class="t" id="t39" style="left:692.00px;top:344.63px;font-size:10.6px;color:#474e66;-webkit-text-stroke:.25px #474e66;">|</span>
<span class="t" id="t40" style="left:701.10px;top:345.03px;font-size:10.6px;color:#3f7bf6;letter-spacing:-0.420px;">YEAR</span>
<span class="t" id="t41" style="left:507.00px;top:372.10px;font-size:13px;color:#444b5e;letter-spacing:0.547px;">03/03/2026</span>
<span class="t" id="t42" style="left:498.30px;top:422.35px;font-size:10.1px;color:#4e5877;letter-spacing:-0.239px;-webkit-text-stroke:.1px #55607f;">JOURNEY</span>
<span class="t" id="t43" style="left:507.00px;top:451.10px;font-size:13px;color:#444b5e;letter-spacing:0.325px;">M332EA</span>
<span class="t" id="t44" style="left:507.00px;top:500.60px;font-size:13px;color:#444b5e;letter-spacing:0.503px;">L377HP</span>
<span class="t" id="t45" style="left:926.70px;top:551.73px;font-size:13.2px;color:#fff;font-weight:700;letter-spacing:-0.371px;-webkit-text-stroke:.15px #02ab17;">Calculate journey</span>
<span class="t" id="t46" style="left:972.00px;top:592.59px;font-size:26px;color:#343c55;letter-spacing:-0.145px;-webkit-text-stroke:.35px #f3f0e4;">44.91</span>
<span class="t" id="t47" style="left:1041.80px;top:603.60px;font-size:13px;color:#596180;letter-spacing:0.081px;">mi</span>
<span class="t" id="t48" style="left:1088.40px;top:78.33px;font-size:20px;color:#1f2330;font-family:'Liberation Serif',serif;letter-spacing:-0.043px;will-change:transform;">Most recent entries</span>
<span class="t" id="t49" style="left:1096.30px;top:122.25px;font-size:10.1px;color:#4e5877;letter-spacing:-0.206px;-webkit-text-stroke:.1px #55607f;">FILTER</span>
<span class="t" id="t50" style="left:1129.00px;top:148.90px;font-size:13px;color:#444b5e;letter-spacing:0.116px;">Last 30 days</span>
<span class="t" id="t51" style="left:1105.00px;top:198.50px;font-size:13px;color:#3a4052;letter-spacing:-0.062px;">February</span>
<span class="t" id="t52" style="left:1163.80px;top:198.50px;font-size:13px;color:#3a4052;letter-spacing:0.072px;">Average vehicle - petrol</span>
<span class="t" id="t53" style="left:1569.50px;top:197.60px;font-size:13px;color:#3a4052;letter-spacing:0.319px;">100.00 l</span>
<span class="t" id="t54" style="left:1138.80px;top:248.10px;font-size:13px;color:#4c5160;letter-spacing:-0.146px;">FORD C-MAX TITANIUM TURBO</span>
<span class="t" id="t55" style="left:1380.40px;top:236.30px;font-size:13px;color:#4c5160;">No carbon details available</span>
<span class="t" id="t56" style="left:1105.00px;top:308.30px;font-size:13px;color:#4a5473;letter-spacing:0.030px;">1 to 1 of 1 entries</span>
<span class="t" id="t57" style="left:1481.60px;top:308.43px;font-size:13.2px;color:#3a4256;font-weight:700;letter-spacing:-0.603px;-webkit-text-stroke:.3px #e4e7f0;">Previous</span>
<span class="t" id="t58" style="left:1561.00px;top:308.43px;font-size:13.2px;color:#fff;font-weight:700;">1</span>
<span class="t" id="t59" style="left:1596.30px;top:308.43px;font-size:13.2px;color:#3a4256;font-weight:700;letter-spacing:0.135px;-webkit-text-stroke:.3px #e4e7f0;">Next</span>
</body>
</html>
